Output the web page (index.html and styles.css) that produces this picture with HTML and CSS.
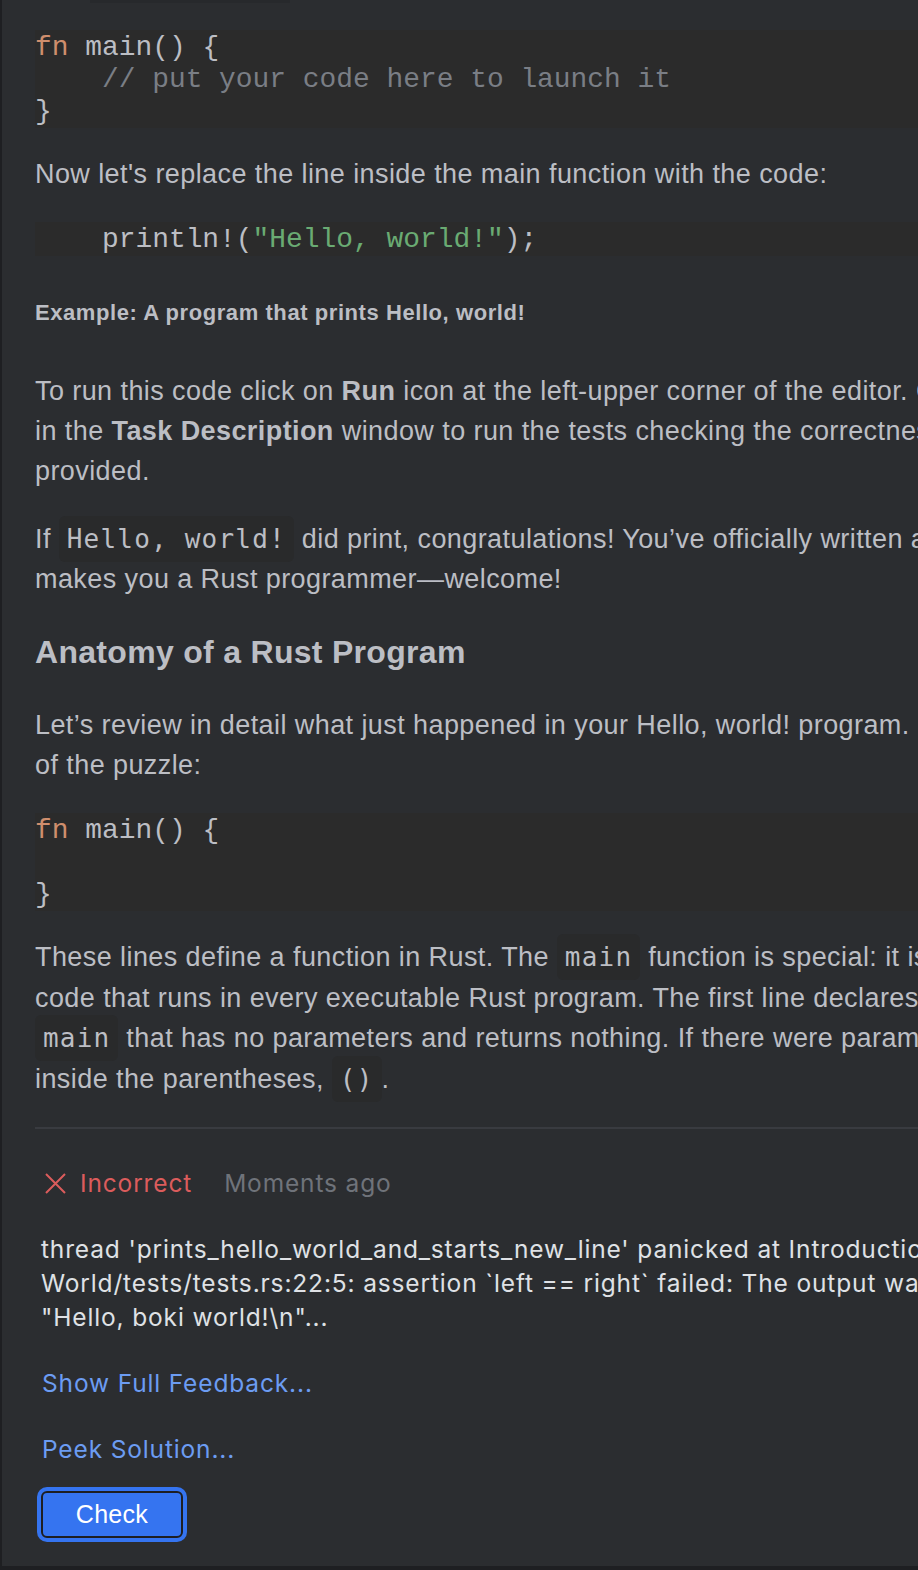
FILE: index.html
```html
<!DOCTYPE html>
<html lang="en">
<head>
<meta charset="utf-8">
<title>Task Description</title>
<link rel="stylesheet" href="styles.css">
</head>
<body>
<div class="panel">
  <div class="topbar"></div>
  <div class="doc">
    <pre class="code"><span class="kw">fn</span> main() {
    <span class="cm">// put your code here to launch it</span>
}</pre>
    <p>Now let's replace the line inside the main function with the code:</p>
    <pre class="code">    println!(<span class="str">"Hello, world!"</span>);</pre>
    <p class="caption">Example: A program that prints Hello, world!</p>
    <p>To run this code click on <b>Run</b> icon at the left-upper corner of the editor. Click <b>Check</b><br>in the <b>Task Description</b> window to run the tests checking the correctness of the code you<br>provided.</p>
    <p>If <code>Hello, world!</code> did print, congratulations! You’ve officially written a Rust program. That<br>makes you a Rust programmer—welcome!</p>
    <h2>Anatomy of a Rust Program</h2>
    <p>Let’s review in detail what just happened in your Hello, world! program. Here’s the first piece<br>of the puzzle:</p>
    <pre class="code"><span class="kw">fn</span> main() {

}</pre>
    <p class="tall">These lines define a function in Rust. The <code>main</code> function is special: it is always the first<br>code that runs in every executable Rust program. The first line declares a function named<br><code>main</code> that has no parameters and returns nothing. If there were parameters, they would go<br>inside the parentheses, <code>()</code>.</p>
    <hr class="rule">
    <div class="feedback">
      <div class="status">
        <svg class="x-icon" width="23" height="23" viewBox="0 0 23 23"><path d="M2 2 L21 21 M21 2 L2 21" stroke="#db5c5c" stroke-width="2" fill="none"/></svg>
        <span class="incorrect">Incorrect</span>
        <span class="time">Moments ago</span>
      </div>
      <p class="error">thread 'prints_hello_world_and_starts_new_line' panicked at Introduction/Getting Started/Hello<br>World/tests/tests.rs:22:5: assertion `left == right` failed: The output was not as expected<br>"Hello, boki world!\n"...</p>
      <a class="link first" href="#">Show Full Feedback...</a>
      <a class="link" href="#">Peek Solution...</a>
      <button class="check" type="button">Check</button>
    </div>
  </div>
</div>
</body>
</html>
```
FILE: styles.css
```css
html, body {
  margin: 0;
  padding: 0;
  background: #1e1f22;
  overflow: hidden;
}

.panel {
  margin-left: 2px;
  height: 1566px;
  background: #2b2d30;
  overflow: hidden;
}

.topbar {
  width: 200px;
  height: 3px;
  margin-left: 88px;
  background: #27292c;
}

.doc {
  padding: 27px 0 0 33px;
  width: 1500px;
  font-family: "Liberation Sans", Arial, sans-serif;
  font-size: 27px;
  letter-spacing: 0.42px;
  line-height: 40px;
  color: #bcbec4;
}

.doc p {
  margin: 28px 0 0;
  white-space: nowrap;
}

.doc b {
  font-weight: bold;
}

.code {
  margin: 28px 0 0;
  padding: 2px 0 0;
  background: #2b2b2b;
  font-family: "Liberation Mono", "Courier New", monospace;
  font-size: 27.9px;
  letter-spacing: 0;
  line-height: 32px;
  color: #bcbec4;
}

.doc > .code:first-child {
  margin-top: 0;
}

.doc .code + p {
  margin-top: 26px;
}

.kw { color: #cf8e6d; }
.str { color: #6aab73; }
.cm { color: #7a7e85; }

.doc p.caption {
  font-size: 22px;
  font-weight: bold;
  line-height: 30px;
  padding: 16px 0;
  letter-spacing: 0.57px;
}

.doc p.caption + p {
  margin-top: 27px;
}

code {
  font-family: "DejaVu Sans Mono", monospace;
  font-size: 26px;
  letter-spacing: 1.2px;
  background: #292a2b;
  border-radius: 6px;
  padding: 8px 8px;
}

h2 {
  margin: 33px 0 0;
  font-size: 32px;
  letter-spacing: 0.3px;
  line-height: 40px;
  font-weight: bold;
  color: #bcbec4;
}

.doc h2 + p {
  margin-top: 33px;
}

.doc p.tall {
  line-height: 40.6px;
}

.rule {
  margin: 28px 0 0;
  border: 0;
  height: 2px;
  background: #393b40;
}

.feedback {
  padding-left: 6px;
  font-family: Inter, "Liberation Sans", sans-serif;
  font-size: 24.5px;
  letter-spacing: 0.85px;
  line-height: 34px;
  display: flex;
  flex-direction: column;
  align-items: flex-start;
}

.status {
  margin-top: 37px;
  display: flex;
  align-items: center;
  height: 34px;
}

.x-icon {
  margin-left: 3px;
  margin-right: 13px;
}

.incorrect {
  color: #db5c5c;
}

.time {
  margin-left: 32px;
  color: #6f737a;
}

.feedback p.error {
  margin: 32px 0 0;
  color: #dfe1e5;
}

.link {
  color: #6c9cf2;
  text-decoration: none;
  margin-top: 32px;
  margin-left: 1px;
}

.check {
  margin-top: 25px;
  width: 142px;
  height: 47px;
  background: #3574f0;
  border: 2px solid #1e1f22;
  border-radius: 6px;
  box-shadow: 0 0 0 4px #3574f0;
  color: #ffffff;
  font-family: "Liberation Sans", Arial, sans-serif;
  font-size: 25px;
  letter-spacing: 0.3px;
  padding: 0;
}
```
